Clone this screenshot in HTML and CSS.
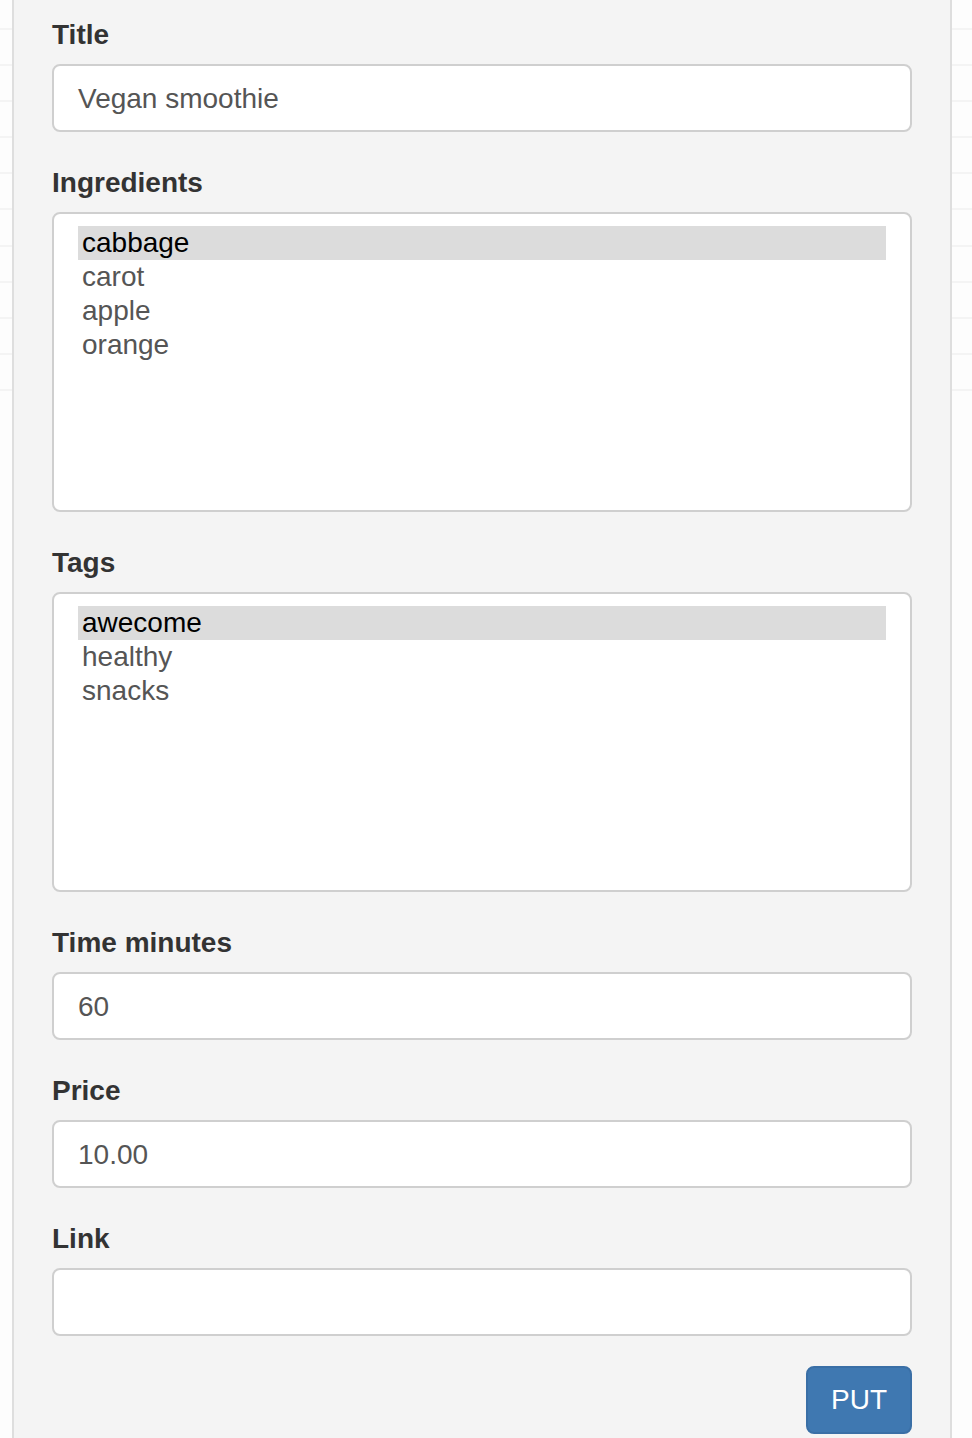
FILE: index.html
```html
<!DOCTYPE html>
<html>
<head>
<meta charset="utf-8">
<link rel="stylesheet" href="styles.css">
</head>
<body>
<div class="page">
  <form class="well">
    <div class="form-group">
      <label class="control-label">Title</label>
      <div class="form-control">Vegan smoothie</div>
    </div>
    <div class="form-group">
      <label class="control-label">Ingredients</label>
      <div class="form-control select-multi">
        <div class="option selected">cabbage</div>
        <div class="option">carot</div>
        <div class="option">apple</div>
        <div class="option">orange</div>
      </div>
    </div>
    <div class="form-group">
      <label class="control-label">Tags</label>
      <div class="form-control select-multi">
        <div class="option selected">awecome</div>
        <div class="option">healthy</div>
        <div class="option">snacks</div>
      </div>
    </div>
    <div class="form-group">
      <label class="control-label">Time minutes</label>
      <div class="form-control">60</div>
    </div>
    <div class="form-group">
      <label class="control-label">Price</label>
      <div class="form-control">10.00</div>
    </div>
    <div class="form-group">
      <label class="control-label">Link</label>
      <div class="form-control"></div>
    </div>
    <div class="form-actions">
      <button type="button" class="btn-primary">PUT</button>
    </div>
  </form>
</div>
</body>
</html>
```

FILE: styles.css
```css
html, body {
  margin: 0;
  padding: 0;
}
body {
  height: 1438px;
  overflow: hidden;
  background-color: #fdfdfd;
  background-image: repeating-linear-gradient(to bottom, transparent 0, transparent 28px, #f4f4f4 28px, #f4f4f4 30px, transparent 30px, transparent 36.1px);
  background-size: 100% 410px;
  background-repeat: no-repeat;
  font-family: "Liberation Sans", Arial, sans-serif;
}
.page {
  padding: 0 20px 0 12px;
}
.well {
  box-sizing: border-box;
  height: 1438px;
  overflow: hidden;
  margin: 0;
  background: #f4f4f4;
  border-left: 2px solid #dedede;
  border-right: 2px solid #dedede;
  padding: 14px 38px 0 38px;
}
.form-group {
  margin-bottom: 30px;
}
.control-label {
  display: block;
  font-weight: bold;
  font-size: 28px;
  line-height: 40px;
  padding-top: 1px;
  color: #333;
  margin-bottom: 9px;
}
.form-control {
  box-sizing: border-box;
  height: 68px;
  background: #fff;
  border: 2px solid #cfcfcf;
  border-radius: 8px;
  padding: 0 24px;
  font-size: 28px;
  line-height: 66px;
  color: #555;
}
.select-multi {
  height: 300px;
  padding: 12px 24px;
  line-height: 34px;
}
.option {
  padding-left: 4px;
  height: 34px;
  line-height: 34px;
  font-size: 28px;
  color: #555;
}
.option.selected {
  background: #dcdcdc;
  color: #000;
}
.form-actions {
  display: flex;
  justify-content: flex-end;
}
.btn-primary {
  box-sizing: border-box;
  height: 68px;
  width: 106px;
  padding: 0;
  background: #3f78b1;
  border: 2px solid #3a6fa6;
  border-radius: 8px;
  color: #fff;
  font-family: "Liberation Sans", Arial, sans-serif;
  font-size: 28px;
  line-height: 64px;
}
```
